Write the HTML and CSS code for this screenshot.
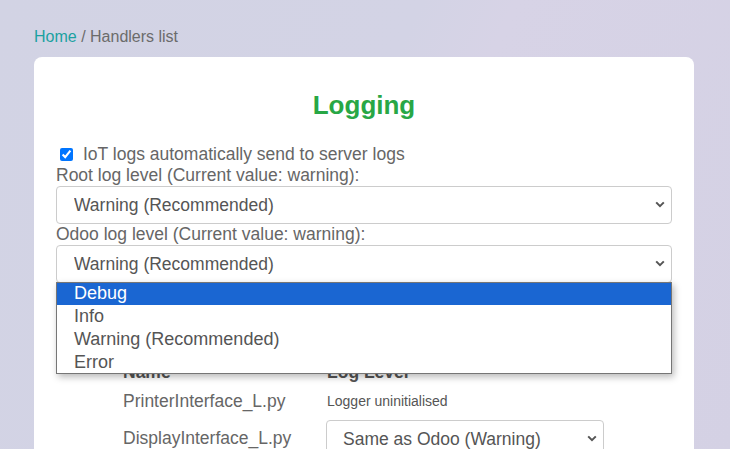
FILE: index.html
```html
<!DOCTYPE html>
<html lang="en">
<head>
<meta charset="utf-8">
<title>Handlers list</title>
<link rel="stylesheet" href="styles.css">
</head>
<body>
<div class="page">
  <nav class="crumbs"><a class="crumb-link" href="#">Home</a> / Handlers list</nav>
  <main class="card">
    <h1 class="title">Logging</h1>
    <form class="form">
      <label class="check"><input class="check-box" type="checkbox" checked>IoT logs automatically send to server logs</label>
      <label class="lbl">Root log level (Current value: warning):</label>
      <select class="sel">
        <option>Debug</option>
        <option>Info</option>
        <option selected>Warning (Recommended)</option>
        <option>Error</option>
      </select>
      <label class="lbl">Odoo log level (Current value: warning):</label>
      <div class="sel-wrap">
        <select class="sel">
          <option>Debug</option>
          <option>Info</option>
          <option selected>Warning (Recommended)</option>
          <option>Error</option>
        </select>
        <ul class="popup">
          <li class="popup-item is-active">Debug</li>
          <li class="popup-item">Info</li>
          <li class="popup-item">Warning (Recommended)</li>
          <li class="popup-item">Error</li>
        </ul>
      </div>
      <h2 class="sub">Interfaces logging</h2>
      <div class="table">
        <div class="th">Name</div>
        <div class="th">Log Level</div>
        <div class="td">PrinterInterface_L.py</div>
        <div class="td small">Logger uninitialised</div>
        <div class="td">DisplayInterface_L.py</div>
        <div class="td">
          <select class="sel sel-sm">
            <option selected>Same as Odoo (Warning)</option>
            <option>Debug</option>
            <option>Info</option>
            <option>Warning</option>
            <option>Error</option>
          </select>
        </div>
      </div>
    </form>
  </main>
</div>
</body>
</html>
```

FILE: styles.css
```css
html, body {
  margin: 0;
  height: 100%;
}
body {
  font-family: "Liberation Sans", Arial, sans-serif;
  color: #666;
  background: linear-gradient(115deg, #d2d3e4 0%, #d3d3e5 45%, #d7d3e6 55%, #d4d1e4 100%);
  overflow: hidden;
}
.page {
  padding: 27px 36px 0 34px;
  height: 100vh;
  box-sizing: border-box;
  overflow: hidden;
}
.crumbs {
  font-size: 16px;
  line-height: 20px;
  color: #6b6b6b;
}
.crumb-link {
  color: #1ba1a1;
  text-decoration: none;
}
.card {
  margin-top: 10px;
  background: #fff;
  border-radius: 8px;
  padding: 0 22px 40px;
  width: 616px;
}
.title {
  margin: 0;
  padding-top: 33px;
  font-size: 26px;
  line-height: 31px;
  font-weight: bold;
  color: #28a745;
  text-align: center;
}
.form {
  margin-top: 22.5px;
  font-size: 17.5px;
  line-height: 21px;
  display: flex;
  flex-direction: column;
}
.check {
  display: flex;
  align-items: center;
  height: 21px;
}
.check-box {
  width: 13px;
  height: 13px;
  margin: 0 10px 0 4px;
  accent-color: #0075ff;
}
.lbl {
  display: block;
  height: 21px;
}
.sel {
  font-family: "Liberation Sans", Arial, sans-serif;
  font-size: 17.5px;
  color: #555;
  height: 38px;
  width: 100%;
  padding: 0 30px 0 17px;
  border: 1px solid #ccc;
  border-radius: 4px;
  background-color: #fff;
  -webkit-appearance: none;
  appearance: none;
  background-image: url("data:image/svg+xml;utf8,<svg xmlns='http://www.w3.org/2000/svg' width='10' height='7' viewBox='0 0 10 7'><path d='M1.2 1.4 L5 5.2 L8.8 1.4' fill='none' stroke='%23555' stroke-width='2'/></svg>");
  background-repeat: no-repeat;
  background-position: right 6px center;
  background-size: 10px 7px;
  box-sizing: border-box;
  display: block;
}
.sel-wrap {
  position: relative;
}
.popup {
  position: absolute;
  left: 0;
  right: 0;
  top: 37.5px;
  margin: 0;
  padding: 0;
  list-style: none;
  background: #fff;
  border: 1px solid #767676;
  box-shadow: 2px 3px 7px rgba(0, 0, 0, 0.28);
  font-size: 18px;
  line-height: 22.75px;
  color: #555;
  z-index: 5;
}
.popup-item {
  padding-left: 17px;
  height: 22.75px;
}
.popup-item.is-active {
  background: #1a66d2;
  color: #fff;
}
.popup-item:first-child {
  line-height: 21px;
  height: 22px;
}
.sub {
  margin: 25px 0 26px;
  font-size: 20px;
  line-height: 24px;
  text-align: center;
  color: #666;
}
.table {
  display: grid;
  grid-template-columns: 204px 278px;
  padding-left: 67px;
  align-items: center;
}
.th {
  font-weight: bold;
  padding: 4px 0;
  color: #555;
}
.td {
  padding: 4px 0;
}
.small {
  font-size: 14px;
  color: #555;
}
.sel-sm {
  width: 278px;
  margin-left: -1px;
  padding-left: 16px;
}
```
